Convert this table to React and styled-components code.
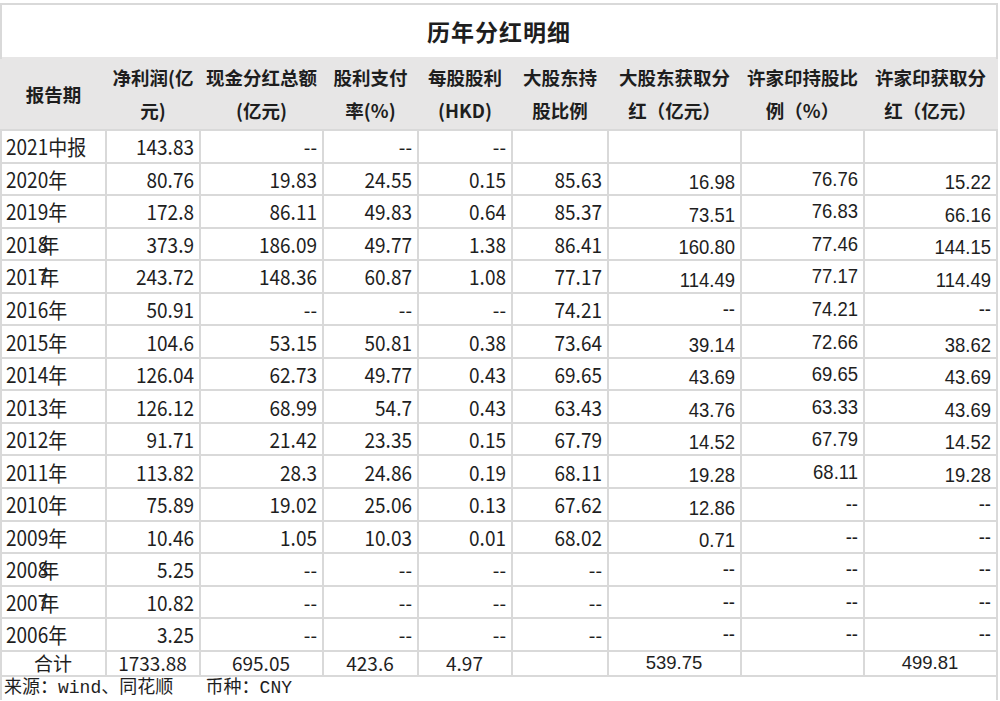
import styled, { createGlobalStyle } from 'styled-components';

const GlobalStyle = createGlobalStyle`
  body {
    margin: 0;
    background: #fff;
  }
`;

const Page = styled.div`
  padding-top: 3px;
  width: 1000px;
`;

const Sheet = styled.table`
  width: 996px;
  border-collapse: collapse;
  table-layout: fixed;
  color: #1e1e1e;
  font-family: 'Noto Sans CJK SC', 'Microsoft YaHei', sans-serif;
`;

const TitleCell = styled.th`
  height: 52px;
  border: 2px solid #d9d9d9;
  border-bottom: none;
  font-size: 23px;
  font-weight: 700;
  letter-spacing: 1px;
  text-align: center;
  padding: 0;
`;

const HeadCell = styled.th`
  height: 70px;
  padding: 0;
  background: #e7e6e6;
  border: 2px solid #e7e6e6;
  border-bottom-color: #d9d9d9;
  font-size: 18.5px;
  font-weight: 700;
  line-height: 33px;
  text-align: center;
  white-space: nowrap;
  overflow: hidden;
`;

const Row = styled.tr`
  height: ${(p) => (p.$total ? '25px' : '32.56px')};
`;

const Cell = styled.td`
  padding: 0 5px 0 4px;
  padding-bottom: ${(p) => (p.$low ? '1px' : '0')};
  border: 2px solid #d9d9d9;
  font-family: ${(p) =>
    p.$arial
      ? "'Liberation Sans', Arial, sans-serif"
      : "'Noto Sans CJK SC', 'Microsoft YaHei', sans-serif"};
  font-size: ${(p) => (p.$arial ? '18.5px' : '19px')};
  line-height: 22px;
  text-align: ${(p) => p.$align || 'right'};
  vertical-align: ${(p) => (p.$low ? 'bottom' : 'middle')};
  white-space: nowrap;
  overflow: hidden;
`;

const Value = styled.span`
  display: inline-block;
  transform: scaleY(1.1);
`;

const Year = styled.span`
  margin-left: ${(p) => (p.$tight ? '-8px' : '0')};
`;

const SourceCell = styled.td`
  height: 23px;
  padding: 0 0 0 2px;
  border: 2px solid #d9d9d9;
  border-bottom: none;
  font-family: 'Liberation Mono', 'Noto Sans CJK SC', monospace;
  font-size: 18px;
  line-height: 22px;
  white-space: pre;
`;

const widths = [105, 94, 123, 95, 94, 96, 133, 123, 133];

const heads = [
  ['报告期'],
  ['净利润(亿', '元)'],
  ['现金分红总额', '(亿元)'],
  ['股利支付', '率(%)'],
  ['每股股利', '(HKD)'],
  ['大股东持', '股比例'],
  ['大股东获取分', '红（亿元）'],
  ['许家印持股比', '例（%）'],
  ['许家印获取分', '红（亿元）'],
];

const rows = [
  ['2021', '中报', false, ['143.83', '--', '--', '--', '', '', '', '']],
  ['2020', '年', false, ['80.76', '19.83', '24.55', '0.15', '85.63', '16.98', '76.76', '15.22']],
  ['2019', '年', false, ['172.8', '86.11', '49.83', '0.64', '85.37', '73.51', '76.83', '66.16']],
  ['2018', '年', true, ['373.9', '186.09', '49.77', '1.38', '86.41', '160.80', '77.46', '144.15']],
  ['2017', '年', true, ['243.72', '148.36', '60.87', '1.08', '77.17', '114.49', '77.17', '114.49']],
  ['2016', '年', false, ['50.91', '--', '--', '--', '74.21', '--', '74.21', '--']],
  ['2015', '年', false, ['104.6', '53.15', '50.81', '0.38', '73.64', '39.14', '72.66', '38.62']],
  ['2014', '年', false, ['126.04', '62.73', '49.77', '0.43', '69.65', '43.69', '69.65', '43.69']],
  ['2013', '年', false, ['126.12', '68.99', '54.7', '0.43', '63.43', '43.76', '63.33', '43.69']],
  ['2012', '年', false, ['91.71', '21.42', '23.35', '0.15', '67.79', '14.52', '67.79', '14.52']],
  ['2011', '年', false, ['113.82', '28.3', '24.86', '0.19', '68.11', '19.28', '68.11', '19.28']],
  ['2010', '年', false, ['75.89', '19.02', '25.06', '0.13', '67.62', '12.86', '--', '--']],
  ['2009', '年', false, ['10.46', '1.05', '10.03', '0.01', '68.02', '0.71', '--', '--']],
  ['2008', '年', true, ['5.25', '--', '--', '--', '--', '--', '--', '--']],
  ['2007', '年', true, ['10.82', '--', '--', '--', '--', '--', '--', '--']],
  ['2006', '年', false, ['3.25', '--', '--', '--', '--', '--', '--', '--']],
];

const totals = ['1733.88', '695.05', '423.6', '4.97', '', '539.75', '', '499.81'];

const isArial = (i) => i >= 5;
const isLow = (i, v) => (i === 5 || i === 7) && v !== '--';

const App = () => (
  <Page>
    <GlobalStyle />
    <Sheet>
      <colgroup>
        {widths.map((w, i) => (
          <col key={i} style={{ width: w }} />
        ))}
      </colgroup>
      <thead>
        <tr>
          <TitleCell colSpan={9}>历年分红明细</TitleCell>
        </tr>
        <tr>
          {heads.map((h, i) => (
            <HeadCell key={i}>
              {h[0]}
              {h[1] && <br />}
              {h[1]}
            </HeadCell>
          ))}
        </tr>
      </thead>
      <tbody>
        {rows.map(([year, suffix, tight, values]) => (
          <Row key={year}>
            <Cell $align='left'>
              <Value>
                {year}
                <Year $tight={tight}>{suffix}</Year>
              </Value>
            </Cell>
            {values.map((v, i) => (
              <Cell key={i} $arial={isArial(i)} $low={isLow(i, v)}>
                <Value>{v}</Value>
              </Cell>
            ))}
          </Row>
        ))}
        <Row $total>
          <Cell $align='center'>合计</Cell>
          {totals.map((v, i) => (
            <Cell key={i} $align='center' $arial={isArial(i)}>
              {v}
            </Cell>
          ))}
        </Row>
        <tr>
          <SourceCell colSpan={9}>{'来源：wind、同花顺   币种：CNY'}</SourceCell>
        </tr>
      </tbody>
    </Sheet>
  </Page>
);

export default App;
